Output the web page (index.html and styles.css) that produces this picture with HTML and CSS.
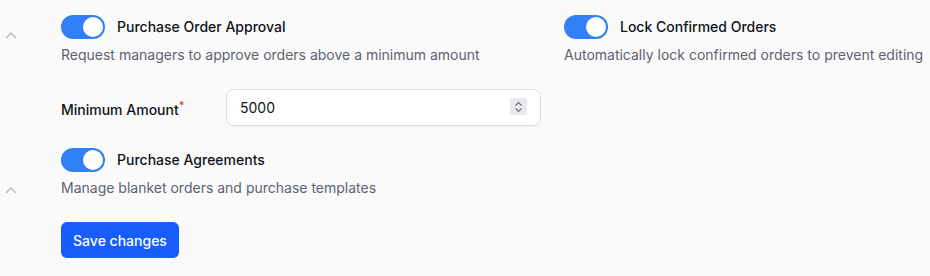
FILE: index.html
```html
<!DOCTYPE html>
<html lang="en">
<head>
<meta charset="UTF-8">
<meta name="viewport" content="width=device-width, initial-scale=1.0">
<title>Purchase Settings</title>
<link rel="stylesheet" href="styles.css">
</head>
<body>

<div class="settings">
    <svg class="collapse collapse-one" width="12" height="7" viewBox="0 0 12 7"><polyline points="1,6 6,1 11,6" fill="none" stroke="#b8b8bc" stroke-width="1.3"/></svg>
    <svg class="collapse collapse-two" width="12" height="7" viewBox="0 0 12 7"><polyline points="1,6 6,1 11,6" fill="none" stroke="#b8b8bc" stroke-width="1.3"/></svg>

    <div class="group">
        <div class="option">
            <div class="toggle-row">
                <span class="toggle on"><span class="knob"></span></span>
                <span class="label">Purchase Order Approval</span>
            </div>
            <p class="desc">Request managers to approve orders above a minimum amount</p>
        </div>
        <div class="option">
            <div class="toggle-row">
                <span class="toggle on"><span class="knob"></span></span>
                <span class="label">Lock Confirmed Orders</span>
            </div>
            <p class="desc">Automatically lock confirmed orders to prevent editing</p>
        </div>
    </div>

    <div class="field">
        <label class="field-label">Minimum Amount<span class="req">*</span></label>
        <div class="input-wrap">
            <input class="input" type="text" value="5000">
            <span class="spinner">
                <svg width="9" height="12" viewBox="0 0 9 12"><polyline points="1.5,4.5 4.5,1.5 7.5,4.5" fill="none" stroke="#6b6b74" stroke-width="1.1"/><polyline points="1.5,7.5 4.5,10.5 7.5,7.5" fill="none" stroke="#6b6b74" stroke-width="1.1"/></svg>
            </span>
        </div>
    </div>

    <div class="option single">
        <div class="toggle-row">
            <span class="toggle on"><span class="knob"></span></span>
            <span class="label">Purchase Agreements</span>
        </div>
        <p class="desc">Manage blanket orders and purchase templates</p>
    </div>

    <button class="save">Save changes</button>
</div>

</body>
</html>
```

FILE: styles.css
```css
* {
    box-sizing: border-box;
    margin: 0;
    padding: 0;
}

body {
    background: #fafafa;
    font-family: Inter, "Noto Sans", sans-serif;
    font-size: 14px;
    color: #111318;
}

.settings {
    position: relative;
    padding: 15px 0 0 61px;
}

.collapse {
    position: absolute;
    left: 5px;
}

.collapse-one {
    top: 32px;
}

.collapse-two {
    top: 187px;
}

.group {
    display: grid;
    grid-template-columns: 503px auto;
}

.toggle-row {
    display: flex;
    align-items: center;
    gap: 12px;
    height: 24px;
}

.toggle {
    width: 44px;
    height: 24px;
    border-radius: 12px;
    background: #d4d4d8;
    display: flex;
    align-items: center;
    padding: 2px;
}

.toggle.on {
    background: #3180f7;
    justify-content: flex-end;
}

.knob {
    width: 20px;
    height: 20px;
    border-radius: 50%;
    background: #fff;
}

.label {
    font-weight: 500;
    line-height: 20px;
}

.desc {
    margin-top: 6px;
    line-height: 20px;
    color: #5d6370;
}

.field {
    display: flex;
    align-items: center;
    margin-top: 24px;
}

.field-label {
    width: 165px;
    font-weight: 500;
}

.req {
    color: #e5343a;
    font-size: 11px;
    vertical-align: 6px;
}

.input-wrap {
    position: relative;
    width: 315px;
}

.input {
    width: 100%;
    height: 37px;
    border: 1px solid #dedee2;
    border-radius: 8px;
    background: #fff;
    padding: 0 13px;
    font-family: inherit;
    font-size: 14px;
    color: #111318;
    box-shadow: 0 1px 2px rgba(0, 0, 0, 0.04);
    outline: none;
}

.spinner {
    position: absolute;
    right: 14px;
    top: 9px;
    width: 17px;
    height: 17px;
    background: #e9e9ee;
    display: flex;
    align-items: center;
    justify-content: center;
}

.option.single {
    margin-top: 22px;
}

.save {
    margin-top: 24px;
    height: 36px;
    padding: 0 12px;
    width: 118px;
    border: none;
    border-radius: 6px;
    background: #165dfb;
    color: #fff;
    font-family: inherit;
    font-size: 14px;
    font-weight: 500;
}
```
